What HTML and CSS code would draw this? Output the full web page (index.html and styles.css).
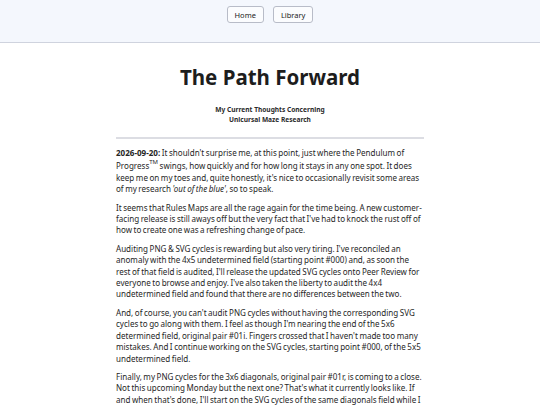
FILE: index.html
```html
<!DOCTYPE html>
<html>
<head>
<meta charset="utf-8">
<link rel="stylesheet" href="styles.css">
</head>
<body>
<header class="topbar">
  <nav class="nav">
    <a class="btn" href="#">Home</a>
    <a class="btn" href="#">Library</a>
  </nav>
</header>
<main class="page">
  <h1 class="title">The Path Forward</h1>
  <p class="subtitle">My Current Thoughts Concerning<br>Unicursal Maze Research</p>
  <hr class="rule">
  <article class="post">
    <p><b>2026-09-20:</b> It shouldn't surprise me, at this point, just where the Pendulum of Progress<sup>TM</sup> swings, how quickly and for how long it stays in any one spot. It does keep me on my toes and, quite honestly, it's nice to occasionally revisit some areas of my research <i>'out of the blue'</i>, so to speak.</p>
    <p>It seems that Rules Maps are all the rage again for the time being. A new customer-facing release is still aways off but the very fact that I've had to knock the rust off of how to create one was a refreshing change of pace.</p>
    <p>Auditing PNG &amp; SVG cycles is rewarding but also very tiring. I've reconciled an anomaly with the 4x5 undetermined field (starting point #000) and, as soon the rest of that field is audited, I'll release the updated SVG cycles onto Peer Review for everyone to browse and enjoy. I've also taken the liberty to audit the 4x4 undetermined field and found that there are no differences between the two.</p>
    <p>And, of course, you can't audit PNG cycles without having the corresponding SVG cycles to go along with them. I feel as though I'm nearing the end of the 5x6 determined field, original pair #01i. Fingers crossed that I haven't made too many mistakes. And I continue working on the SVG cycles, starting point #000, of the 5x5 undetermined field.</p>
    <p>Finally, my PNG cycles for the 3x6 diagonals, original pair #01r, is coming to a close. Not this upcoming Monday but the next one? That's what it currently looks like. If and when that's done, I'll start on the SVG cycles of the same diagonals field while I keep going.</p>
  </article>
</main>
</body>
</html>
```
FILE: styles.css
```css
html, body {
  margin: 0;
  padding: 0;
  background: #ffffff;
  font-family: "Noto Sans", "Open Sans", sans-serif;
  color: #222;
}
.topbar {
  height: 43px;
  background: #f4f7fd;
  border-bottom: 1px solid #cfd3de;
  box-sizing: border-box;
}
.nav {
  display: flex;
  justify-content: center;
  gap: 9px;
  padding-top: 6px;
}
.btn {
  display: inline-flex;
  align-items: center;
  height: 17px;
  box-sizing: border-box;
  padding: 0 7px;
  border: 1px solid #b8bcc8;
  border-radius: 3px;
  background: #fbfcfe;
  color: #222;
  font-size: 7.5px;
  text-decoration: none;
}
.page {
  width: 308px;
  margin: 0 auto;
  padding-top: 20px;
}
.title {
  margin: 0;
  text-align: center;
  font-size: 20.5px;
  font-weight: 700;
  color: #1d1d1d;
  line-height: 28px;
}
.subtitle {
  margin: 14px 0 0;
  text-align: center;
  font-size: 6.6px;
  font-weight: 700;
  line-height: 9.5px;
  color: #2a2a2a;
}
.rule {
  margin: 13px 0 0;
  border: 0;
  height: 2px;
  background: #dcdde3;
}
.post {
  padding-top: 8px;
}
.post p {
  margin: 0 0 7px;
  font-size: 8.05px;
  line-height: 11.4px;
  word-spacing: -0.55px;
  color: #262626;
}
.post sup {
  font-size: 6px;
  line-height: normal;
  vertical-align: 5px;
}
```
